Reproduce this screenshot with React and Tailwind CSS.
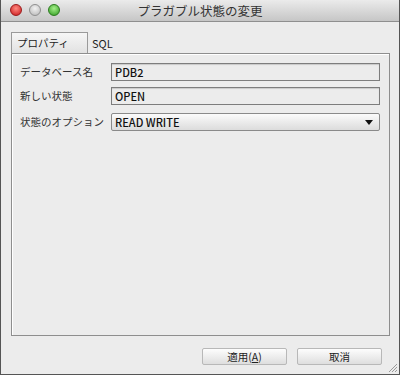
import React from "react";

const jp = { fontFamily: '"Lucida Grande", "Noto Sans CJK JP", "Noto Sans", sans-serif' };

function Light({ from, to, border }) {
  return (
    <div
      className="w-[12px] h-[12px] rounded-full border"
      style={{ background: `radial-gradient(circle at 50% 35%, ${from}, ${to})`, borderColor: border }}
    />
  );
}

function Field({ label, value }) {
  return (
    <div className="flex items-center h-[18px]">
      <div className="w-[91px] text-[10.5px] text-[#333]">{label}</div>
      <div className="flex-1 h-[18px] border border-[#7d7d7d] bg-[#ececec] shadow-[inset_0_1px_1px_rgba(0,0,0,0.15)] flex items-center pl-[3px] text-[11px] font-medium text-[#111]">
        {value}
      </div>
    </div>
  );
}

export default function App() {
  return (
    <div className="w-[400px] h-[375px] bg-[#ececec] flex flex-col border-l border-r border-b border-[#555] overflow-hidden relative" style={jp}>
      {/* title bar */}
      <div className="h-[22px] shrink-0 flex items-center relative border-b border-[#8f8f8f] bg-gradient-to-b from-[#ebebeb] to-[#c6c6c6]">
        <div className="absolute left-[9px] top-[4px] flex gap-[7px]">
          <Light from="#ff8a80" to="#c8161b" border="#9b1a1a" />
          <Light from="#f2f2f2" to="#b5b5b5" border="#8f8f8f" />
          <Light from="#a6f08b" to="#2f9a1f" border="#2b7a1e" />
        </div>
        <div className="flex-1 text-center text-[12.5px] text-[#333] leading-none pt-[1px]">プラガブル状態の変更</div>
      </div>

      {/* body */}
      <div className="flex-1 flex flex-col pl-[10px] pr-[9px] pt-[10px]">
        <div className="flex items-end h-[21px]">
          <div className="w-[77px] h-[21px] border border-b-0 border-[#9a9a9a] bg-gradient-to-b from-[#f6f6f6] to-[#e2e2e2] text-[10.5px] text-[#222] pl-[5px] flex items-center">
            プロパティ
          </div>
          <div className="ml-[4px] h-[20px] flex items-center text-[11px] text-[#222]">SQL</div>
        </div>
        <div className="h-[283px] border border-[#8e8e8e] shadow-[inset_1px_1px_0_#ffffff] flex flex-col pl-[8px] pr-[9px] pt-[9px] gap-[6px]">
          <Field label="データベース名" value="PDB2" />
          <Field label="新しい状態" value="OPEN" />
          <div className="flex items-center h-[18px] mt-[2px]">
            <div className="w-[91px] text-[10.5px] text-[#333]">状態のオプション</div>
            <div className="flex-1 h-[18px] rounded-[2px] border border-[#8a8a8a] bg-gradient-to-b from-[#fbfbfb] to-[#dcdcdc] flex items-center pl-[3px] pr-[6px] text-[11px] font-medium text-[#111]">
              <span className="flex-1">READ WRITE</span>
              <svg width="8" height="5" viewBox="0 0 8 5"><path d="M0 0 H8 L4 5 Z" fill="#111" /></svg>
            </div>
          </div>
        </div>
        <div className="flex justify-end gap-[10px] mt-[12px] pr-[8px]">
          <div className="w-[85px] h-[17px] rounded-[2px] border border-[#b8b8b8] bg-gradient-to-b from-[#fdfdfd] to-[#dedede] flex items-center justify-center text-[10.5px] text-[#222]">
            適用(<span className="underline">A</span>)
          </div>
          <div className="w-[85px] h-[17px] rounded-[2px] border border-[#b8b8b8] bg-gradient-to-b from-[#fdfdfd] to-[#dedede] flex items-center justify-center text-[10.5px] text-[#222]">
            取消
          </div>
        </div>
      </div>
      <svg className="absolute right-[1px] bottom-[1px]" width="10" height="10" viewBox="0 0 10 10">
        <path d="M9 1 L1 9 M9 4 L4 9 M9 7 L7 9" stroke="#9a9a9a" strokeWidth="1" />
      </svg>
    </div>
  );
}
